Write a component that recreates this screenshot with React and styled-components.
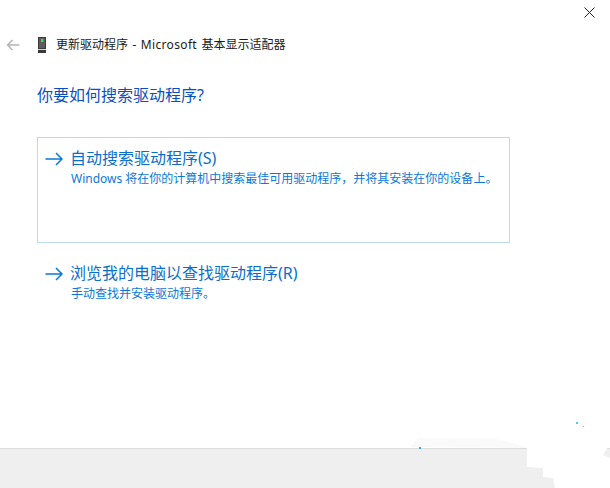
import React from "react";
import styled, { createGlobalStyle } from "styled-components";

const Global = createGlobalStyle`
  html, body { margin: 0; padding: 0; background: #fff; }
  body { font-family: "Noto Sans", "Noto Sans CJK SC", sans-serif; }
`;

const Dialog = styled.div`
  position: relative;
  width: 610px;
  height: 488px;
  overflow: hidden;
  display: flex;
  flex-direction: column;
  background: #fff;
`;
const CloseRow = styled.div`
  height: 36px;
  display: flex;
  justify-content: flex-end;
  align-items: flex-start;
  padding: 7px 15px 0 0;
  box-sizing: border-box;
`;
const Header = styled.div`
  height: 18px;
  display: flex;
  align-items: center;
  padding-left: 6px;
`;
const BackIcon = styled.svg`
  width: 14px;
  height: 12px;
  margin-right: 18px;
`;
const DeviceIcon = styled.svg`
  width: 8px;
  height: 16px;
  margin-right: 10px;
`;
const Title = styled.div`
  font-size: 12px;
  line-height: 18px;
  color: #1a1a1a;
  white-space: nowrap;
  word-spacing: 1.3px;
`;
const Latin = styled.span`
  letter-spacing: 0.35px;
`;
const Content = styled.main`
  flex: 1;
  padding: 29px 100px 0 37px;
`;
const Heading = styled.h1`
  margin: 0 0 30px;
  font-size: 16px;
  font-weight: 400;
  line-height: 24px;
  color: #0a4fc0;
  white-space: nowrap;
`;
const Option = styled.div`
  box-sizing: border-box;
  width: 473px;
  height: ${(p) => p.$height}px;
  margin-bottom: 9px;
  border: 1px solid ${(p) => (p.$selected ? "#bed9ec" : "transparent")};
  padding: 10px 7px 0;
  display: flex;
  gap: 7px;
`;
const Arrow = styled.svg`
  width: 18px;
  height: 14px;
  margin-top: 4px;
  flex: none;
`;
const OptionText = styled.div`
  display: flex;
  flex-direction: column;
`;
const OptionTitle = styled.div`
  font-size: 16px;
  line-height: 21px;
  color: #0a6fc9;
  white-space: nowrap;
`;
const OptionDesc = styled.div`
  margin-top: 2px;
  padding-left: 1px;
  font-size: 12px;
  line-height: 16px;
  color: #0a78d7;
  white-space: nowrap;
`;
const Footer = styled.footer`
  box-sizing: border-box;
  height: 40px;
  background: #efefef;
  border-top: 1px solid #dcdcdc;
`;
const Watermark = styled.svg`
  position: absolute;
  left: 400px;
  top: 400px;
`;

const ArrowIcon = () => (
  <Arrow viewBox="0 0 18 14">
    <path d="M0.5 7H17M11 1l6 6-6 6" fill="none" stroke="#0a78d7" strokeWidth="1.5" />
  </Arrow>
);

export default function App() {
  return (
    <Dialog>
      <Global />
      <CloseRow>
        <svg width="11" height="11" viewBox="0 0 11 11">
          <path d="M.5.5l10 10M10.5.5l-10 10" stroke="#222" strokeWidth="1" fill="none" />
        </svg>
      </CloseRow>
      <Header>
        <BackIcon viewBox="0 0 14 12">
          <path d="M13.5 6H1.5M6.5 1l-5 5 5 5" fill="none" stroke="#b4b4b4" strokeWidth="1.5" />
        </BackIcon>
        <DeviceIcon viewBox="0 0 8 16">
          <rect x="0" y="0" width="8" height="16" fill="#3a3a3a" />
          <rect x="1" y="1" width="6" height="10" fill="#5c5c5c" />
          <rect x="3" y="2" width="2.4" height="3" fill="#3ee04a" />
          <rect x="0" y="12" width="8" height="1" fill="#d8d8d8" />
        </DeviceIcon>
        <Title>更新驱动程序 - <Latin>Microsoft</Latin> 基本显示适配器</Title>
      </Header>
      <Content>
        <Heading>你要如何搜索驱动程序?</Heading>
        <Option $selected $height={106}>
          <ArrowIcon />
          <OptionText>
            <OptionTitle>自动搜索驱动程序(S)</OptionTitle>
            <OptionDesc>Windows 将在你的计算机中搜索最佳可用驱动程序，并将其安装在你的设备上。</OptionDesc>
          </OptionText>
        </Option>
        <Option $height={60}>
          <ArrowIcon />
          <OptionText>
            <OptionTitle>浏览我的电脑以查找驱动程序(R)</OptionTitle>
            <OptionDesc>手动查找并安装驱动程序。</OptionDesc>
          </OptionText>
        </Option>
      </Content>
      <Footer />
      <Watermark width="210" height="88" viewBox="0 0 210 88">
        <path d="M10 47l8-9h72l20 4 17 6z" fill="#fafafa" />
        <path d="M127 47v20l16 1v9l10 1 2 10h55V58l-7-3 5-8z" fill="#fff" />
        <rect x="19" y="47" width="2" height="2" fill="#29a9e8" />
        <rect x="176" y="22" width="2" height="2" fill="#5cc4ee" />
        <rect x="183" y="26" width="1" height="1" fill="#5cc4ee" />
      </Watermark>
    </Dialog>
  );
}
